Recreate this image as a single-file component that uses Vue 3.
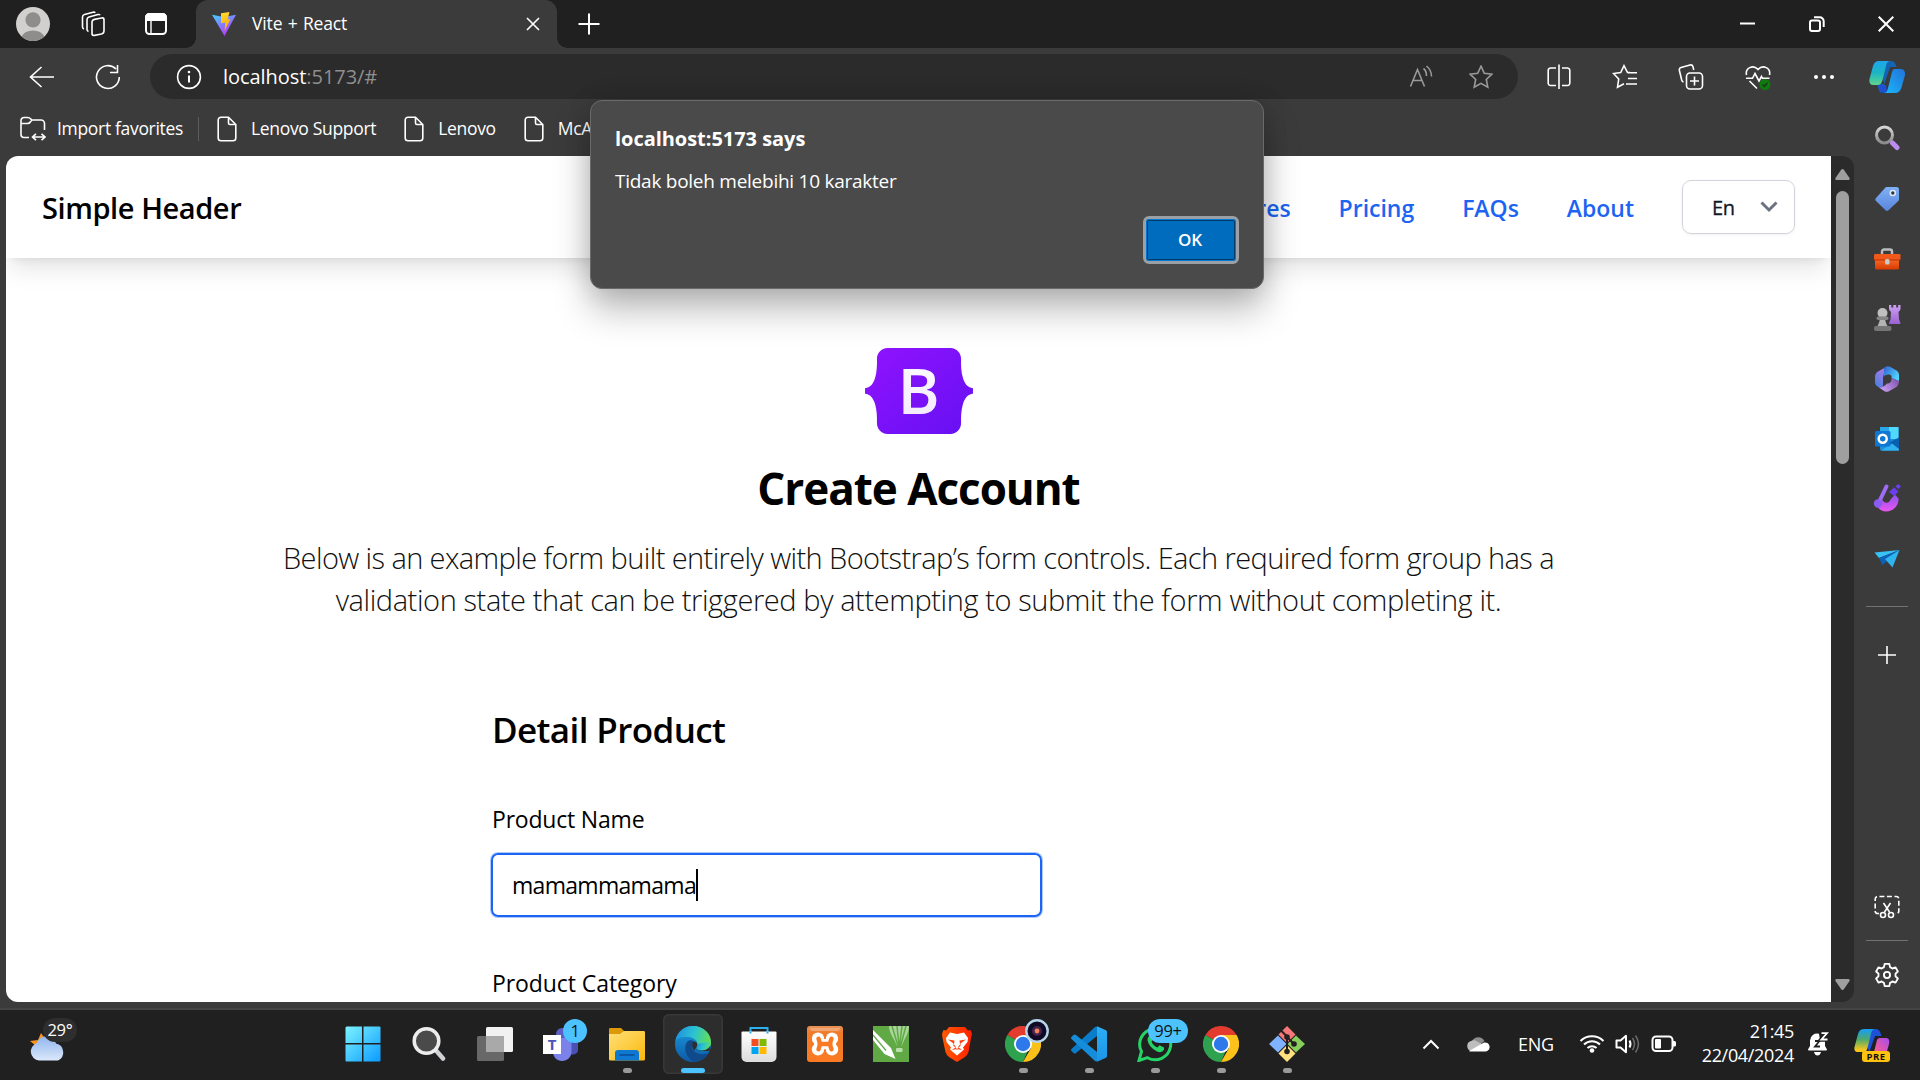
<script setup>
import { ref } from 'vue'

const bookmarks = ['Lenovo Support', 'Lenovo', 'McAfee']
const links = ['Features', 'Pricing', 'FAQs', 'About']
const productName = ref('mamammamama')
</script>

<template>
  <div class="desktop">
    <svg width="0" height="0" class="defs" aria-hidden="true">
      <defs>
        <linearGradient id="vite-a" x1="0" y1="0" x2="0.6" y2="1"><stop offset="0" stop-color="#41d1ff" /><stop offset="1" stop-color="#bd34fe" /></linearGradient>
        <linearGradient id="vite-b" x1="0" y1="0" x2="0.2" y2="1"><stop offset="0" stop-color="#ffdd35" /><stop offset="1" stop-color="#ffa800" /></linearGradient>
        <linearGradient id="cp-a" x1="0" y1="0" x2="0" y2="1"><stop offset="0" stop-color="#1fa5ee" /><stop offset="0.5" stop-color="#1cb5c4" /><stop offset="1" stop-color="#5fd68a" /></linearGradient>
        <linearGradient id="cp-b" x1="1" y1="0" x2="0" y2="1"><stop offset="0" stop-color="#2272d8" /><stop offset="1" stop-color="#19b8fb" /></linearGradient>
        <linearGradient id="cp-c" x1="0" y1="0" x2="0" y2="1"><stop offset="0" stop-color="#159dfa" /><stop offset="0.45" stop-color="#4ca96e" /><stop offset="0.9" stop-color="#f5c51c" /></linearGradient>
        <linearGradient id="cp-d" x1="1" y1="0" x2="0" y2="1"><stop offset="0" stop-color="#a44df0" /><stop offset="0.55" stop-color="#ee5aa0" /><stop offset="1" stop-color="#ff9a55" /></linearGradient>
        <linearGradient id="win" x1="0" y1="0" x2="1" y2="1"><stop offset="0" stop-color="#7df3ff" /><stop offset="1" stop-color="#0a9bff" /></linearGradient>
        <linearGradient id="bs" x1="0" y1="0" x2="1" y2="1"><stop offset="0" stop-color="#9013fe" /><stop offset="1" stop-color="#6610f2" /></linearGradient>
        <linearGradient id="bs-b" x1="0" y1="0" x2="0" y2="1"><stop offset="0" stop-color="#fff" /><stop offset="1" stop-color="#f1e5fc" /></linearGradient>
        <linearGradient id="folder" x1="0" y1="0" x2="1" y2="1"><stop offset="0" stop-color="#ffe07a" /><stop offset="1" stop-color="#fbb90c" /></linearGradient>
        <linearGradient id="edge-a" x1="0" y1="0.3" x2="1" y2="0.5"><stop offset="0" stop-color="#1f8fe0" /><stop offset="0.5" stop-color="#2bc3d2" /><stop offset="1" stop-color="#63e04f" /></linearGradient>
        <linearGradient id="edge-b" x1="0" y1="0" x2="0" y2="1"><stop offset="0" stop-color="#1b9de2" /><stop offset="1" stop-color="#0c59a4" /></linearGradient>
        <linearGradient id="cloud" x1="0" y1="0" x2="0" y2="1"><stop offset="0" stop-color="#8fb5ee" /><stop offset="1" stop-color="#dce8fb" /></linearGradient>
        <linearGradient id="tag" x1="0" y1="0" x2="0" y2="1"><stop offset="0" stop-color="#7fb0f5" /><stop offset="1" stop-color="#5a86dc" /></linearGradient>
        <linearGradient id="box" x1="0" y1="0" x2="0" y2="1"><stop offset="0" stop-color="#ff7a35" /><stop offset="1" stop-color="#d83b01" /></linearGradient>
        <linearGradient id="silver" x1="0" y1="0" x2="0" y2="1"><stop offset="0" stop-color="#d6d6d6" /><stop offset="1" stop-color="#8a8a8a" /></linearGradient>
        <linearGradient id="rook" x1="0" y1="0" x2="0" y2="1"><stop offset="0" stop-color="#cfa0f5" /><stop offset="1" stop-color="#9a62cf" /></linearGradient>
        <linearGradient id="m-a" x1="0" y1="1" x2="0.6" y2="0"><stop offset="0" stop-color="#3f7fe0" /><stop offset="1" stop-color="#b07be8" /></linearGradient>
        <linearGradient id="m-b" x1="0" y1="0" x2="1" y2="0.6"><stop offset="0" stop-color="#2f5fd0" /><stop offset="1" stop-color="#4fd3ff" /></linearGradient>
        <linearGradient id="m-c" x1="0" y1="0.5" x2="1" y2="0"><stop offset="0" stop-color="#c79af0" /><stop offset="1" stop-color="#7a4fa8" /></linearGradient>
        <linearGradient id="pink" x1="0" y1="0" x2="0" y2="1"><stop offset="0" stop-color="#8b52f0" /><stop offset="1" stop-color="#ec56f0" /></linearGradient>
        <linearGradient id="brave" x1="0" y1="0" x2="1" y2="0"><stop offset="0" stop-color="#ff5a00" /><stop offset="1" stop-color="#ff2000" /></linearGradient>
        <linearGradient id="vs" x1="0" y1="0" x2="0" y2="1"><stop offset="0" stop-color="#2bb0f5" /><stop offset="1" stop-color="#1c94e6" /></linearGradient>
        <linearGradient id="store" x1="0" y1="0" x2="0" y2="1"><stop offset="0" stop-color="#fff" /><stop offset="1" stop-color="#dcdcdc" /></linearGradient>
        <linearGradient id="xampp" x1="0" y1="0" x2="0" y2="1"><stop offset="0" stop-color="#e8935a" /><stop offset="0.2" stop-color="#f27a26" /><stop offset="1" stop-color="#fb7a24" /></linearGradient>
      </defs>
    </svg>

    <div class="browser">
      <header class="tabstrip">
        <div class="slot s66">
          <svg width="34" height="34" viewBox="0 0 34 34"><circle cx="17" cy="17" r="17" fill="#d2d0ce" /><circle cx="17" cy="12.800" r="7.600" fill="#8f8d8b" /><path d="M5.500 29.500A12.500 10 0 0 1 28.500 29.500A17 17 0 0 1 5.500 29.500Z" fill="#8f8d8b" /></svg>
        </div>
        <div class="slot s54">
          <svg width="26" height="26" viewBox="0 0 26 26" class="ln"><rect x="12" y="7.500" width="12" height="16" rx="2.500" transform="skewY(-12) translate(0 4)" /><path d="M8.500 20.500C7.500 20 7 19.500 7 18.500V8.500C7 7 7.600 6.300 9 5.900L18 3.500C19 3.300 19.700 3.600 20 4.300M4 18C3 17.500 2.500 17 2.500 16V6C2.500 4.700 3 3.900 4.500 3.500L13 1.200C14 1 14.800 1.300 15 2" /></svg>
        </div>
        <div class="slot s72">
          <svg width="24" height="24" viewBox="0 0 24 24" class="ln w2"><rect x="2" y="2" width="20" height="20" rx="3.500" /><path d="M2 5.500A3.500 3.500 0 0 1 5.500 2h13A3.500 3.500 0 0 1 22 5.500V8H2Z" fill="#fff" /><path d="M7 8v14" stroke-width="1.400" /></svg>
        </div>
        <div class="tab">
          <svg width="24" height="24" viewBox="0 0 24 24"><path d="M0 2.800L12.500 24 24 2.800 12 5Z" fill="url(#vite-a)" /><path d="M9 1.200L17.500 0l-1.800 7.500 2.800-.5L12.500 19l.8-8.500-4.300.8Z" fill="url(#vite-b)" /></svg>
          <span class="tab-title">Vite + React</span>
          <svg class="tab-close" width="14" height="14" viewBox="0 0 14 14"><path d="M1 1L13 13M13 1L1 13" class="ln" /></svg>
        </div>
        <div class="slot s64">
          <svg width="22" height="22" viewBox="0 0 22 22" class="ln w2"><path d="M11 .500V21.500M.500 11H21.500" /></svg>
        </div>
        <div class="window-buttons">
          <span><svg width="16" height="16" viewBox="0 0 16 16"><path d="M0 7.500H15" stroke="#fff" stroke-width="2" /></svg></span>
          <span><svg width="16" height="16" viewBox="0 0 16 16" class="ln w2"><rect x="1" y="4.500" width="10" height="10.500" rx="2" /><path d="M5 1.300H10.500A4 4 0 0 1 14.700 5.500V11" /></svg></span>
          <span><svg width="16" height="16" viewBox="0 0 16 16" class="ln w2"><path d="M.700.700L15.300 15.300M15.300.700L.700 15.300" /></svg></span>
        </div>
      </header>

      <div class="toolbar">
        <div class="slot s84">
          <svg width="26" height="22" viewBox="0 0 26 22" class="ln"><path d="M12.500 1L1.500 11 12.500 21M1.500 11H25" /></svg>
        </div>
        <div class="slot s48">
          <svg width="26" height="26" viewBox="0 0 26 26" class="ln"><path d="M24.300 13A11.400 11.400 0 1 1 21 5M22.500 1V8.500H15" /></svg>
        </div>
        <div class="address">
          <svg width="26" height="26" viewBox="0 0 26 26" class="ln"><circle cx="13" cy="13" r="11.400" /><path d="M13 11.500V18.500" stroke-width="2" /><circle cx="13" cy="8" r="1.300" fill="#fff" stroke="none" /></svg>
          <p class="url"><span>localhost</span>:5173/#</p>
          <div class="address-actions">
            <svg width="24" height="24" viewBox="0 0 24 24" class="ln dim"><path d="M1.500 21.500L8.500 4.500 15.500 21.500M4 15.500H13M14.500 3.500C16.500 5 17.500 7.500 17.500 11M17.500 1C20.500 3.500 22.500 7 22.500 11.500" /></svg>
            <svg width="24" height="24" viewBox="0 0 24 24" class="ln dim"><path d="M12 1.200L15.300 8.300 23 9.200 17.300 14.500 18.800 22.200 12 18.400 5.200 22.200 6.700 14.500 1 9.200 8.700 8.300Z" /></svg>
          </div>
        </div>
        <div class="tools">
          <span><svg width="24" height="26" viewBox="0 0 24 26" class="ln"><path d="M9 4H4A2.500 2.500 0 0 0 1.200 6.500V18.500A2.500 2.500 0 0 0 4 21.500H9M15 4H20A2.500 2.500 0 0 1 22.800 6.500V18.500A2.500 2.500 0 0 1 20 21.500H15M12 .500V25" /></svg></span>
          <span><svg width="26" height="26" viewBox="0 0 26 26" class="ln"><path d="M18 8.500L15.500 8.500 12 1.700 8.700 8.500 1.500 9.500 6.700 15 5.500 23.300 12 19.700M16 8.700H25M16 14.500H25M14 20H25" /></svg></span>
          <span><svg width="26" height="26" viewBox="0 0 26 26" class="ln"><rect x="8.500" y="9" width="16" height="16" rx="3.500" /><path d="M16.500 12.500V21.500M12 17H21M5.500 18C4.500 17.800 4 17 3.700 16L1.400 6.500C1.100 5 1.700 4 3 3.600L12 1C13.500.700 14.600 1.300 15 2.700L15.700 6" /></svg></span>
          <span><svg width="26" height="26" viewBox="0 0 26 26" class="ln"><path d="M1.500 11C0 4 8 .200 13 5.500 18 .200 26 4 24.500 11M1 14.300H7.500L10 9.500 14 17 16.500 12.500 17.500 14.300H24.500M4.500 17L12 24.500" /><circle cx="20" cy="20.500" r="5.500" fill="#0f7b0f" stroke="none" /><path d="M17.500 20.500L19.300 22.300 22.500 19" stroke="#1b3a1b" /></svg></span>
          <span><svg width="22" height="6" viewBox="0 0 22 6" fill="#fff"><circle cx="3" cy="3" r="2" /><circle cx="11" cy="3" r="2" /><circle cx="19" cy="3" r="2" /></svg></span>
        </div>
        <div class="slot copilot-slot">
          <svg width="36" height="34" viewBox="0 0 36 34"><path d="M10 1H22C25 1 26.500 3 27.500 7H21L15 25 12 33C9 31 9.500 26 8 24H15Z" fill="#1464b4" /><path d="M9 25H17L18 33H15C11 33 10.500 28 9 25Z" fill="#1d4fd8" /><path d="M10 1H21C18 1 17.500 4 16.500 8L13.500 20C12.500 24 11 25 8 25H4C1 25 0 22 .500 19L4 6C5 2.500 7 1 10 1Z" fill="url(#cp-a)" /><path d="M26 9H32C35 9 36.500 12 36 15L32.500 27.500C31.500 31 29.500 33 26 33H15C18 33 18.500 30 19.500 26L22.500 14C23.500 10 24 9 26 9Z" fill="url(#cp-b)" /></svg>
        </div>
      </div>

      <div class="body">
        <div class="main-col">
          <nav class="bookmarks">
            <svg width="26" height="26" viewBox="0 0 26 26" class="ln"><path d="M9 21.500H4A3 3 0 0 1 1 18.500V4.500A3 3 0 0 1 4 1.500H7.500C9 1.500 10 2 11 3.200L12 4H21A3.500 3.500 0 0 1 24.500 7.500V14M1 7.500H7.500C9 7.500 9.800 6.800 10.500 5.700L12 4M13 21H24.500M16 17.800L12.500 21 16 24.200M21.500 17.800L25 21 21.500 24.200" /></svg>
            <span class="bm import">Import favorites</span>
            <i class="divider"></i>
            <template v-for="b in bookmarks" :key="b">
              <svg class="doc" width="20" height="26" viewBox="0 0 20 26"><path d="M4 1.200H11.500L18.800 8.500V22A2.800 2.800 0 0 1 16 24.800H4A2.800 2.800 0 0 1 1.200 22V4A2.800 2.800 0 0 1 4 1.200ZM11.500 1.500V7A1.500 1.500 0 0 0 13 8.500H18.500" class="ln" /></svg>
              <span class="bm">{{ b }}</span>
            </template>
          </nav>

          <div class="viewport">
            <main class="page">
              <div class="page-header">
                <h1>Simple Header</h1>
                <nav class="links">
                  <a v-for="l in links" :key="l">{{ l }}</a>
                  <div class="lang">
                    <span>En</span>
                    <svg width="18" height="12" viewBox="0 0 18 12"><path d="M1.500 1.500L9 9 16.500 1.500" fill="none" stroke="#6b7280" stroke-width="3" /></svg>
                  </div>
                </nav>
              </div>
              <section class="intro">
                <svg class="logo" width="108" height="86" viewBox="0 0 512 408">
                  <path fill="url(#bs)" d="M106.342 0c-29.214 0-50.827 25.580-49.860 53.320.927 26.647-.278 61.165-8.966 89.310C38.802 170.862 24.070 188.707 0 191v26c24.069 2.293 38.802 20.138 47.516 48.370 8.688 28.145 9.893 62.663 8.965 89.311C55.515 382.420 77.128 408 106.342 408h299.353c29.214 0 50.827-25.580 49.861-53.319-.928-26.648.277-61.166 8.964-89.311 8.715-28.232 23.411-46.077 47.480-48.370v-26c-24.069-2.293-38.765-20.138-47.480-48.370-8.687-28.145-9.892-62.663-8.964-89.310C456.522 25.580 434.909 0 405.695 0H106.342z" />
                  <text x="254" y="313" text-anchor="middle" class="bs-letter" fill="url(#bs-b)">B</text>
                </svg>
                <h2>Create Account</h2>
                <p class="lead"><span class="l1">Below is an example form built entirely with Bootstrap’s form controls. Each required form group has a</span><br><span class="l2">validation state that can be triggered by attempting to submit the form without completing it.</span></p>
              </section>
              <form class="form">
                <h3>Detail Product</h3>
                <label class="name">Product Name</label>
                <div class="field"><span>{{ productName }}</span><i class="caret"></i></div>
                <label class="category">Product Category</label>
              </form>
            </main>
            <div class="scrollbar">
              <svg width="15" height="11" viewBox="0 0 15 11"><path d="M7.500 0C8.200 0 8.600.400 9 1L14.500 9C15 10 14.600 11 13.500 11H1.500C.400 11 0 10 .500 9L6 1C6.400.400 6.800 0 7.500 0Z" fill="#9f9f9f" /></svg>
              <i class="thumb"></i>
              <svg class="down" width="15" height="11" viewBox="0 0 15 11"><path d="M7.500 11C8.200 11 8.600 10.600 9 10L14.500 2C15 1 14.600 0 13.500 0H1.500C.400 0 0 1 .500 2L6 10C6.400 10.600 6.800 11 7.500 11Z" fill="#9f9f9f" /></svg>
            </div>
          </div>
        </div>

        <aside class="sidebar">
          <span><svg class="lift" width="26" height="26" viewBox="0 0 26 26"><circle cx="10.500" cy="10" r="8" fill="none" stroke="url(#silver)" stroke-width="3" /><path d="M18.500 18L23 22.500" stroke="#bd8cf0" stroke-width="5" stroke-linecap="round" /></svg></span>
          <span><svg width="26" height="26" viewBox="0 0 26 26"><path d="M13 1H22.500A2.500 2.500 0 0 1 25 3.500V13C25 14 24.700 14.500 24 15.200L14.500 24.200C13.500 25.200 12.500 25.200 11.500 24.200L2 15C1 14 1 13 2 12L11 2C11.600 1.300 12 1 13 1Z" fill="url(#tag)" /><circle cx="18.800" cy="7" r="2.500" fill="#2d3440" stroke="#dfe8f5" stroke-width="1.600" /></svg></span>
          <span><svg width="28" height="22" viewBox="0 0 28 22"><path d="M9 6V3.500A2 2 0 0 1 11 1.500H17A2 2 0 0 1 19 3.500V6" fill="none" stroke="#bdbdbd" stroke-width="2.400" /><rect x="2" y="8" width="24" height="13.500" rx="1.500" fill="url(#box)" /><rect x="1" y="6" width="26.500" height="6" rx="1.200" fill="#f0591a" /><path d="M1 12H27.500" stroke="#b93200" /><rect x="12" y="11" width="4.500" height="5.500" rx="1.500" fill="#c9c9c9" /></svg></span>
          <span><svg class="lift" width="28" height="28" viewBox="0 0 28 28"><path d="M16 1H18.300V3.500H20.300V1H23.200V3.500H25.200V1H27.500V5C27.500 6.500 26 7 25.500 8L26 15C26.300 17 27.500 18 27.500 20H16C16 18 17.200 17 17.500 15L18 8C17.500 7 16 6.500 16 5Z" fill="url(#rook)" /><circle cx="9.500" cy="9" r="5" fill="#bfbfbf" /><path d="M7 12H12C12 17 13 19 14.500 22H4.500C6 19 7 17 7 12Z" fill="#b3b3b3" /><rect x="3.500" y="12.500" width="12" height="3.500" rx="1.700" fill="#858585" /><rect x="1" y="22" width="17.500" height="5" rx="2" fill="#757575" /></svg></span>
          <span><svg width="26" height="26" viewBox="0 0 26 26"><path d="M13 .500L4 5.500C2 6.800 1 8.500 1 10.500V16C1 18 2 19.500 3.500 20.500L6 22 9 20.500V11C9 9.500 9.500 8.500 11 7.500Z" fill="url(#m-a)" /><path d="M10 2L13 .300C14 0 15 .200 16 .700L22.500 4.500C24 5.500 25 7 25 9V15L17.500 12C18 10 17 8.500 15 8.500 12.500 8.500 9.500 9.500 9.500 12Z" fill="url(#m-b)" /><path d="M5 21.500C8 22 11 19.500 13 17.500 16 17.500 18 15.500 17.500 12L25 15C25 18 24 20 22 21.300L15 25.200C13.500 26 12 26 10.500 25.200Z" fill="url(#m-c)" /></svg></span>
          <span><svg width="26" height="26" viewBox="0 0 26 26"><rect x="6" y="1" width="18.500" height="23.500" rx="1.500" fill="#1b8fdc" /><rect x="6" y="1" width="9" height="12" fill="#28a8ea" /><rect x="15" y="1" width="9.500" height="12" fill="#50d9ff" /><path d="M15 18L24.500 12.500V24.500H8Z" fill="#1490df" /><path d="M14 17L25 11.500V23Z" fill="#0a5fae" /><path d="M7 24.500L18 17.500 25 23V24.500Z" fill="#32b2ee" /><rect x="1" y="5" width="15.500" height="15.500" rx="1.500" fill="#0f78d4" /><circle cx="8.700" cy="12.700" r="4" fill="none" stroke="#fff" stroke-width="2.500" /></svg></span>
          <span><svg class="lift" width="28" height="30" viewBox="0 0 28 30"><path d="M3 17C3 24 7 28.500 13 28.500 20 28.500 26 23 25.500 15.500L22 11.500 17.500 16.500C16 21 11 20.500 9.500 17Z" fill="url(#pink)" /><path d="M13.500 3.500L6.500 18" stroke="#a06cf5" stroke-width="4" stroke-linecap="round" /><circle cx="5" cy="20.500" r="4.200" fill="#8a5cf0" /><path d="M21 4.500L25.500 8.500 21 13 16 9Z" fill="#6b3ff0" /><path d="M25 1L28 3.500 25.500 6 22.500 3.500Z" fill="#6b3ff0" /></svg></span>
          <span><svg width="26" height="20" viewBox="0 0 26 20"><path d="M.500 3.500L25.500 1 5 9Z" fill="#38c1f5" /><path d="M5 9L25.500 1 8.500 16Z" fill="#0b62b8" /><path d="M11 10L25.500 1 18.500 18.500Z" fill="#2fb4f0" /></svg></span>
          <i class="rule"></i>
          <span class="add"><svg width="20" height="20" viewBox="0 0 20 20" class="ln"><path d="M10 1V19M1 10H19" /></svg></span>
          <div class="sidebar-bottom">
            <span><svg width="26" height="24" viewBox="0 0 26 24" class="ln"><path d="M5 18.500H3.500A2.300 2.300 0 0 1 1.200 16.200V4A2.500 2.500 0 0 1 3.700 1.500H22.300A2.500 2.500 0 0 1 24.800 4V16.200A2.300 2.300 0 0 1 22.500 18.500H21" stroke-dasharray="5 2.500" /><path d="M9.500 8L15.500 17M16.500 8L10.500 17" /><circle cx="9" cy="20" r="2.500" /><circle cx="17" cy="20" r="2.500" /></svg></span>
            <i class="rule"></i>
            <span><svg width="26" height="28" viewBox="0 0 28 28" class="ln w2"><path d="M11.500 2H16.500L17.300 5.500 19.800 7 23.200 5.800 25.700 10.200 23.200 12.600V15.400L25.700 17.800 23.200 22.200 19.800 21 17.300 22.500 16.500 26H11.500L10.700 22.500 8.200 21 4.800 22.200 2.300 17.800 4.800 15.400V12.600L2.300 10.200 4.800 5.800 8.200 7 10.700 5.500Z" stroke-linejoin="round" /><circle cx="14" cy="14" r="3.300" /></svg></span>
          </div>
        </aside>
      </div>

      <div class="dialog" role="alertdialog">
        <h4>localhost:5173 says</h4>
        <p>Tidak boleh melebihi 10 karakter</p>
        <button>OK</button>
      </div>
    </div>

    <footer class="taskbar">
      <div class="weather">
        <svg width="38" height="36" viewBox="0 0 38 36"><path d="M1 15L9 14 12 7 17 14 12 24Z" fill="#f7941d" /><path d="M10 34.500A9 9 0 0 1 8 17 10 10 0 0 1 27 17.500 9 9 0 0 1 29 34.500Z" fill="url(#cloud)" /></svg>
        <span class="temp">29°</span>
      </div>
      <div class="apps">
        <span><svg width="36" height="36" viewBox="0 0 36 36"><path d="M1.500.500H17V17H.500V1.500ZM18.500.500H34.500Q35.500.500 35.500 1.500V17H18.500ZM.500 18.500H17V35.500H1.500Q.500 35.500.500 34.500ZM18.500 18.500H35.500V34.500Q35.500 35.500 34.500 35.500H18.500Z" fill="url(#win)" /></svg></span>
        <span><svg width="34" height="36" viewBox="0 0 34 36"><path d="M24.500 25L31 32.500" stroke="#cfd2d5" stroke-width="4.500" stroke-linecap="round" /><circle cx="14.500" cy="15" r="12.300" fill="#4a4a4a" stroke="#ededed" stroke-width="3.500" /></svg></span>
        <span><svg width="36" height="36" viewBox="0 0 36 36"><rect x="9" y="1" width="27" height="25" rx="1.500" fill="#f2f2f2" /><rect x="0" y="10" width="27" height="25" rx="1.500" fill="#686868" /><path d="M9 10H27V26H9Z" fill="#a9a9a9" /></svg></span>
        <span class="badged"><svg width="36" height="36" viewBox="0 0 36 36"><circle cx="19" cy="8" r="6" fill="#5b5fc7" /><path d="M26 12H35V24C35 27 32 29 28 28.500Z" fill="#4b50b5" /><path d="M10 12H28.500V26C28.500 31 24 35 19 35S10 31 10 26Z" fill="#7b83eb" /><rect x="0" y="9" width="18" height="19" fill="#fff" /></svg><b class="teams-t">T</b><em class="badge one">1</em></span>
        <span class="run"><svg width="36" height="36" viewBox="0 0 36 36"><path d="M0 3Q0 2 1.500 2H12L15 5V10H0Z" fill="#dc9a08" /><path d="M0 8H11L15 5H35Q36 5 36 6.500V33Q36 34.500 34.500 34.500H1.500Q0 34.500 0 33Z" fill="url(#folder)" /><path d="M6 34.500V27A3 3 0 0 1 9 24H27A3 3 0 0 1 30 27V34.500Z" fill="#0f78d0" /><path d="M10.500 29H25.500" stroke="#0a4f96" stroke-width="1.600" /></svg></span>
        <span class="run active"><svg width="36" height="36" viewBox="0 0 36 36"><circle cx="18" cy="18" r="18" fill="url(#edge-b)" /><path d="M.500 15C2 6 9 0 18 0 28 0 36 7 36 16 36 22 31 24.500 27 24.500 23 24.500 20.500 23 22 20.500 24 16.500 20 11.500 14 11 7 10.500 2 12 .500 15Z" fill="url(#edge-a)" /><path d="M12 16C8.500 21 10 30 18 35.500 25 36 31 32 34 26.500 30 29 22 29 18.500 24.500 16 21 17.500 17 19 15.500 16.500 13.500 13.500 14 12 16Z" fill="#114a8b" /><path d="M22 20.500C20.500 23.500 23.500 25 27.500 25 31 25 34 24.500 34.500 25.500L35 20 22.300 19Z" fill="#2e2e2e" /><path d="M21.500 20.500C23 16 27 18 36 15C36.500 21 32 24.500 27 24.500 23 24.500 20.700 23 21.500 20.500Z" fill="url(#edge-a)" /><path d="M18.500 15.500C21 15.500 23 17 22 20 21.500 22 20 22.500 19.500 24.500 16 21 17 17 18.500 15.500Z" fill="#2e2e2e" /></svg></span>
        <span><svg width="36" height="36" viewBox="0 0 36 36"><path d="M9.500 8V2H26.500V8" fill="none" stroke="#2ab0ee" stroke-width="2" /><path d="M.500 6.500Q.500 5.500 1.500 5.500H34.500Q35.500 5.500 35.500 6.500V31A5 5 0 0 1 30.500 36H5.500A5 5 0 0 1 .500 31Z" fill="url(#store)" /><path d="M9.500 5.500V7.500M26.500 5.500V7.500" stroke="#2ab0ee" stroke-width="2" /><path d="M10.500 13H17.500V20H10.500Z" fill="#f25022" /><path d="M18.500 13H25.500V20H18.500Z" fill="#7fba00" /><path d="M10.500 21H17.500V28H10.500Z" fill="#00a4ef" /><path d="M18.500 21H25.500V28H18.500Z" fill="#ffb900" /></svg></span>
        <span><svg width="36" height="36" viewBox="0 0 36 36"><rect width="36" height="36" rx="3" fill="url(#xampp)" /><path d="M3 2H33V3Q32 5 30 5H6Q4 5 3 3Z" fill="#f5c7a5" opacity="0.500" /><g fill="#fff"><circle cx="11" cy="12.700" r="6.200" /><circle cx="25" cy="12.700" r="6.200" /><circle cx="11" cy="23.300" r="6.200" /><circle cx="25" cy="23.300" r="6.200" /><rect x="7" y="13" width="22" height="10" /></g><g fill="none" stroke="#f97a24" stroke-linecap="round" stroke-width="4.400"><path d="M11.500 12.800Q14 18 11.500 23.200M24.500 12.800Q22 18 24.500 23.200M13 18H23" /></g></svg></span>
        <span><svg width="36" height="36" viewBox="0 0 36 36"><path d="M0 0H36V36H0Z" fill="#60a945" /><path d="M16 0H36C36 7 32 12 28.500 20H24C21 12 16 7 16 0Z" fill="#a9d59a" /><path d="M19 0L25 20M33 0L27.500 20M24 0L26 20M29 0L26.500 20" stroke="#60a945" stroke-width="1.500" /><rect x="23" y="22" width="6.500" height="4" rx="1" fill="#b9dfac" /><path d="M0 4L18 22 22.500 33 11.500 28 0 14Z" fill="#fff" /><path d="M0 9L13 24.500" stroke="#60a945" stroke-width="1.200" /></svg></span>
        <span><svg width="36" height="36" viewBox="0 0 36 36"><path d="M10 1H26L29 4.500 31.500 4 33 8 32 12 29.500 26Q28.500 29 26 31L18 36 10 31Q7.500 29 6.500 26L3.500 12 3 8 4.500 4 7 4.500Z" fill="url(#brave)" /><path d="M11 6.500L18 8 25 6.500 29 12 28.500 16 24 21.500 25 23.500 18 29.500 11 23.500 12 21.500 7.500 16 7 12Z" fill="#fff" /><path d="M9 13.500L15.500 14.500 15 18.500 17 21 13 24 18 22.500 23 24 19 21 21 18.500 20.500 14.500 27 13.500 21.500 17.500 21.500 20 18 22.500 14.500 20V17.500ZM12 24L18 23.500 24 24" fill="#fb4314" /></svg></span>
        <span class="run badged"><svg width="36" height="36" viewBox="0 0 36 36"><path d="M18 18L2.400 9A18 18 0 0 1 33.600 9Z" fill="#e33b2e" /><path d="M18 18H25.800L18 36A18 18 0 0 1 2.400 9Z" fill="#2fa24f" /><path d="M18 9H33.600A18 18 0 0 1 18 36L25.800 22.500Z" fill="#fdc21a" /><circle cx="18" cy="18" r="9" fill="#fff" /><circle cx="18" cy="18" r="7.200" fill="#2d78ea" /></svg><svg class="ava" width="24" height="24" viewBox="0 0 24 24"><circle cx="12" cy="12" r="10.700" fill="#100a24" stroke="#b4d4ec" stroke-width="2.400" /><circle cx="12" cy="12" r="5" fill="#43234c" /><circle cx="12" cy="12" r="2.400" fill="#f4805c" /></svg></span>
        <span class="run"><svg width="36" height="36" viewBox="0 0 36 36"><path d="M26 .500V10L5 27Q3.500 28 2.500 27L.500 25Q-.500 24 .500 23L24 1Z" fill="#0a7cc9" /><path d="M26 35.500V26L5 9Q3.500 8 2.500 9L.500 11Q-.500 12 .500 13L24 35Z" fill="#168ddb" /><path d="M26 .300L35 4.200Q36 4.700 36 6V30Q36 31.300 35 31.800L26 35.700Z" fill="url(#vs)" /></svg></span>
        <span class="run badged"><svg width="36" height="36" viewBox="0 0 36 36"><path d="M2 34.500L4.500 25.500A15.500 15.500 0 1 1 10.500 31.700Z" fill="none" stroke="#25d366" stroke-width="3" /><path d="M13 9.500Q10.500 10.500 10.500 14 11.500 21 20 25.500 25 27.500 27 23.500V21.500L22.500 19.300 20.500 21.500Q16 19.500 14.500 15.500L16 13.500 14.500 9.500Z" fill="#25d366" /></svg><em class="badge many">99+</em></span>
        <span class="run"><svg width="36" height="36" viewBox="0 0 36 36"><path d="M18 18L2.400 9A18 18 0 0 1 33.600 9Z" fill="#e33b2e" /><path d="M18 18H25.800L18 36A18 18 0 0 1 2.400 9Z" fill="#2fa24f" /><path d="M18 9H33.600A18 18 0 0 1 18 36L25.800 22.500Z" fill="#fdc21a" /><circle cx="18" cy="18" r="9" fill="#fff" /><circle cx="18" cy="18" r="7.200" fill="#2d78ea" /></svg></span>
        <span class="run"><svg width="36" height="36" viewBox="0 0 36 36"><path d="M18 0L26.500 8.500 18 17 9.500 8.500Z" fill="#f87878" /><path d="M9 9.500L17.500 18 9 26.500 0 18Z" fill="#80b3ff" /><path d="M27 9.500L36 18 27 26.500 18.500 18Z" fill="#87ce5c" /><path d="M18 19L26.500 27.500 18 36 9.500 27.500Z" fill="#ffe07f" /><path d="M12 4.500L18 10.500V26M18 11L25 18" stroke="#231f20" stroke-width="2" fill="none" /><circle cx="18" cy="11" r="2.800" fill="#231f20" /><circle cx="18" cy="25.500" r="2.800" fill="#231f20" /><circle cx="25" cy="18" r="2.800" fill="#231f20" /></svg></span>
      </div>
      <div class="tray">
        <svg class="chev" width="18" height="11" viewBox="0 0 18 11"><path d="M1.500 9.500L9 2 16.500 9.500" class="ln w2" /></svg>
        <svg class="onedrive" width="24" height="18" viewBox="0 0 24 18"><path d="M6 6A7 7 0 0 1 18.500 6L12 11Z" fill="#8e8e8e" /><path d="M5 16A5.200 5.200 0 0 1 5 6Q8 4.500 11 6.500L22 12Z" fill="#bdbdbd" /><path d="M3 16L18 7.500A4.500 4.500 0 0 1 20 16.500H5Q3.700 16.500 3 16Z" fill="#fff" /></svg>
        <span class="lang-code">ENG</span>
        <svg class="wifi" width="26" height="20" viewBox="0 0 26 20"><path d="M1.500 7A16.500 16.500 0 0 1 24.500 7M5 10.500A11.500 11.500 0 0 1 21 10.500M8.500 14A6.500 6.500 0 0 1 17.500 14" class="ln w2" /><circle cx="13" cy="16.500" r="2.300" fill="#fff" /></svg>
        <svg class="vol" width="26" height="20" viewBox="0 0 26 20"><path d="M1.500 6.500H5.500L11 1.800V18.200L5.500 13.500H1.500ZM14.500 6.500Q16.500 10 14.500 13.500" class="ln w2" stroke-linejoin="round" /><path d="M17.500 4Q21.500 10 17.500 16M20.500 1.500Q26.500 10 20.500 18.500" fill="none" stroke="#6b6b6b" stroke-width="1.500" /></svg>
        <svg class="bat" width="26" height="18" viewBox="0 0 26 18"><rect x="1.500" y="1.500" width="20" height="14.500" rx="3.500" class="ln w2" /><rect x="4" y="4" width="6" height="9.500" rx="1" fill="#fff" /><path d="M22 6H23.500Q25 6 25 7.500V10Q25 11.500 23.500 11.500H22Z" fill="#fff" /></svg>
        <div class="clock"><span class="time">21:45</span><span>22/04/2024</span></div>
        <svg class="bell" width="22" height="24" viewBox="0 0 22 24"><path d="M1 17.500L3 14V8.500A7 7 0 0 1 12 1.800L13 8 18 9V14L20 17.500Q20 18.500 19 18.500H2Q1 18.500 1 17.500ZM7 20H14Q13 23.500 10.500 23.500T7 20Z" fill="#fff" /><path d="M8 9H12.500L8 14.500H13" fill="none" stroke="#202020" stroke-width="1.800" /><path d="M14.500 1.200H20L14.500 7.500H20.500" fill="none" stroke="#202020" stroke-width="4.500" /><path d="M14.500 1.200H20L14.500 7.500H20.500" fill="none" stroke="#fff" stroke-width="1.800" /></svg>
        <div class="pre">
          <svg width="36" height="34" viewBox="0 0 36 34"><path d="M10 1H22C25 1 26.500 4 27.500 8H21L15 25Z" fill="#1c51d8" /><path d="M10 1H21C18 1 17.500 4 16.500 8L13.500 20C12.500 24 11 24 8 24H4C1 24 0 22 .500 19L4 6C5 2.500 7 1 10 1Z" fill="url(#cp-c)" /><path d="M26 10H32C34.500 10 36 12 35 16L32.500 25 30 33H15C18 33 18.500 30 19.500 26L22.500 14C23 11 24 10 26 10Z" fill="url(#cp-d)" /></svg>
          <b>PRE</b>
        </div>
      </div>
    </footer>
  </div>
</template>

<style>
html,
body {
  margin: 0;
  background: #202020;
  overflow: hidden;
}
</style>

<style scoped>
* {
  box-sizing: border-box;
}
.desktop {
  width: 1920px;
  height: 1080px;
  overflow: hidden;
  display: flex;
  flex-direction: column;
  font-family: "Open Sans", "Noto Sans", sans-serif;
  letter-spacing: -0.32px;
  color: #fff;
  position: relative;
}
.defs {
  position: absolute;
}
h1, h2, h3, h4, p {
  margin: 0;
}
svg {
  display: block;
  flex: none;
}
.ln {
  fill: none;
  stroke: #fff;
  stroke-width: 1.6;
}
.w2 {
  stroke-width: 2;
}
.dim {
  stroke: #9a9a9a;
}
.slot {
  display: flex;
  align-items: center;
  justify-content: center;
  flex: none;
}
.s66 { width: 66px; }
.s54 { width: 54px; }
.s72 { width: 72px; }
.s64 { width: 64px; }
.s84 { width: 84px; }
.s48 { width: 48px; }

.browser {
  height: 1010px;
  flex: none;
  display: flex;
  flex-direction: column;
  background: #3b3b3b;
  border-bottom: 2px solid #444;
  position: relative;
}
.tabstrip {
  height: 48px;
  flex: none;
  display: flex;
  background: #202020;
}
.tab {
  width: 361px;
  margin-left: 4px;
  flex: none;
  display: flex;
  align-items: center;
  padding: 0 17px 0 16px;
  border-radius: 12px 12px 0 0;
  background: #3b3b3b;
  position: relative;
}
.tab::before,
.tab::after {
  content: "";
  position: absolute;
  bottom: 0;
  width: 10px;
  height: 10px;
}
.tab::before {
  left: -10px;
  background: radial-gradient(circle at 0 0, #202020 9.5px, #3b3b3b 10px);
}
.tab::after {
  right: -10px;
  background: radial-gradient(circle at 100% 0, #202020 9.5px, #3b3b3b 10px);
}
.tab-title {
  margin-left: 16px;
  padding-bottom: 2px;
  font-size: 17.5px;
  letter-spacing: -0.15px;
  word-spacing: 1px;
}
.tab-close {
  margin-left: auto;
}
.window-buttons {
  margin-left: auto;
  display: flex;
}
.window-buttons span {
  width: 69px;
  height: 47px;
  display: flex;
  align-items: center;
  justify-content: center;
}
.toolbar {
  height: 57px;
  flex: none;
  display: flex;
  align-items: center;
}
.address {
  width: 1368px;
  height: 45px;
  margin-left: 18px;
  padding: 0 25px 0 26px;
  border-radius: 23px;
  background: #2b2b2b;
  display: flex;
  align-items: center;
  flex: none;
}
.url {
  margin-left: 21px;
  font-size: 20px;
  letter-spacing: -0.05px;
  color: #8f8f8f;
}
.url span {
  color: #fff;
}
.address-actions {
  margin-left: auto;
  display: flex;
  gap: 36px;
}
.tools {
  display: flex;
  margin-left: 8px;
}
.tools span {
  width: 66.2px;
  display: flex;
  justify-content: center;
  align-items: center;
}
.copilot-slot {
  width: 60px;
}
.body {
  flex: 1;
  min-height: 0;
  display: flex;
}
.main-col {
  width: 1854px;
  display: flex;
  flex-direction: column;
}
.bookmarks {
  height: 51px;
  padding: 0 0 4px 20px;
  display: flex;
  align-items: center;
  overflow: hidden;
}
.bm {
  margin-left: 14px;
  margin-right: 28px;
  padding-bottom: 1px;
  font-size: 17.5px;
  white-space: nowrap;
}
.bm.import {
  margin-left: 11px;
  margin-right: 15px;
}
.divider {
  width: 1px;
  height: 24px;
  margin-right: 18px;
  background: #5c5c5c;
}
.viewport {
  width: 1848px;
  height: 846px;
  margin-left: 6px;
  display: flex;
  border-radius: 12px;
  overflow: hidden;
  background: #2b2b2b;
}
.page {
  width: 1825px;
  background: #fff;
  color: #000;
}
.page-header {
  height: 102px;
  padding: 0 36px;
  display: flex;
  align-items: center;
  justify-content: space-between;
  box-shadow: 0 15px 23px -4px rgba(0, 0, 0, 0.1), 0 6px 9px -6px rgba(0, 0, 0, 0.1);
}
h1 {
  font-size: 29px;
  font-weight: 600;
  letter-spacing: -0.42px;
}
.links {
  display: flex;
  align-items: center;
  gap: 48px;
  color: #1c64f2;
  font-size: 23px;
  font-weight: 600;
  letter-spacing: -0.02px;
}
.links a {
  padding-top: 2px;
}
.lang {
  width: 113px;
  height: 54px;
  padding: 0 16px 0 29px;
  display: flex;
  align-items: center;
  justify-content: space-between;
  border: 1.5px solid #d1d5db;
  border-radius: 9px;
  color: #111827;
  font-size: 20px;
  font-weight: 500;
  letter-spacing: -0.3px;
  -webkit-text-stroke: 0.3px #111827;
  box-shadow: 0 1px 3px rgba(0, 0, 0, 0.06);
}
.intro {
  display: flex;
  flex-direction: column;
  align-items: center;
  padding-top: 90px;
}
.logo {
  overflow: visible;
}
.bs-letter {
  font-size: 304px;
  font-weight: 600;
  letter-spacing: 0;
}
h2 {
  margin-top: 24px;
  font-size: 44px;
  line-height: 60px;
  font-weight: 700;
  letter-spacing: -1.04px;
}
.lead {
  margin-top: 19px;
  font-size: 29px;
  line-height: 42px;
  font-weight: 300;
  text-align: center;
  white-space: nowrap;
  color: #111;
}
.l1 {
  letter-spacing: -0.6px;
}
.l2 {
  letter-spacing: -0.41px;
}
.form {
  padding-left: 486px;
  display: flex;
  flex-direction: column;
}
h3 {
  margin-top: 82px;
  font-size: 35px;
  line-height: 54px;
  font-weight: 600;
  letter-spacing: -0.61px;
}
label {
  font-size: 23px;
  line-height: 36px;
}
.name {
  margin-top: 44px;
  letter-spacing: -0.2px;
}
.field {
  width: 551px;
  height: 64px;
  margin: 16px 0 0 -1px;
  padding-left: 19px;
  display: flex;
  align-items: center;
  border: 2px solid #1c64f2;
  border-radius: 7px;
  font-size: 23px;
  letter-spacing: -0.7px;
  box-shadow: 0 0 0 1px rgba(28, 100, 242, 0.35);
}
.caret {
  width: 2px;
  height: 32px;
  background: #000;
}
.category {
  margin-top: 48px;
  letter-spacing: -0.08px;
}
.scrollbar {
  width: 23px;
  display: flex;
  flex-direction: column;
  align-items: center;
  padding: 13px 0 12px;
}
.thumb {
  width: 13px;
  height: 273px;
  margin-top: 11px;
  border-radius: 7px;
  background: #9f9f9f;
}
.down {
  margin-top: auto;
}
.sidebar {
  width: 66px;
  padding-top: 4px;
  display: flex;
  flex-direction: column;
  align-items: center;
}
.sidebar span {
  height: 60px;
  display: flex;
  align-items: center;
}
.lift {
  margin-bottom: 2px;
}
.rule {
  width: 42px;
  height: 1px;
  margin-top: 17px;
  background: #727272;
}
.sidebar .add {
  height: 96px;
}
.sidebar-bottom {
  margin-top: auto;
  display: flex;
  flex-direction: column;
  align-items: center;
  padding-bottom: 3px;
}
.sidebar-bottom .rule {
  margin: 3px 0 4px;
}

.dialog {
  position: absolute;
  left: 590px;
  top: 100px;
  width: 674px;
  height: 189px;
  padding: 24px;
  display: flex;
  flex-direction: column;
  border: 1px solid #6a6a6a;
  border-radius: 12px;
  background: #4a4a4a;
  box-shadow: 0 20px 36px rgba(0, 0, 0, 0.28), 0 0 26px rgba(0, 0, 0, 0.12);
}
.dialog h4 {
  font-size: 20px;
  line-height: 28px;
  font-weight: 700;
  letter-spacing: -0.04px;
}
.dialog p {
  margin-top: 15px;
  font-size: 19px;
  line-height: 26px;
  letter-spacing: -0.26px;
}
.dialog button {
  width: 96px;
  height: 48px;
  margin: 22px 0 0 auto;
  padding: 0 2px 2px 0;
  border: 3px solid #9aa0a6;
  border-radius: 6px;
  background: #006cbe;
  box-shadow: inset 0 0 0 1px #0078d4, inset 0 0 0 2px #003a66;
  color: #fff;
  font: 600 17px "Open Sans", "Noto Sans", sans-serif;
}

.taskbar {
  height: 70px;
  display: flex;
  background: #202020;
  font-size: 18px;
}
.weather {
  width: 90px;
  padding: 16px 0 0 29px;
  position: relative;
}
.temp {
  position: absolute;
  left: 43px;
  top: 8px;
  width: 34px;
  height: 24px;
  border-radius: 12px;
  background: #2e2e2e;
  font-size: 16.5px;
  line-height: 23px;
  text-align: center;
}
.apps {
  display: flex;
  margin-left: 243px;
}
.apps > span {
  width: 60px;
  height: 60px;
  margin: 4px 6px 0 0;
  display: flex;
  align-items: center;
  justify-content: center;
  position: relative;
  border-radius: 6px;
}
.run::after {
  content: "";
  position: absolute;
  left: 25.5px;
  bottom: 1px;
  width: 9px;
  height: 5px;
  border-radius: 3px;
  background: #9a9a9a;
}
.active {
  background: #2d2d2d;
  box-shadow: inset 0 0 0 1.5px #383838;
}
.active::after {
  left: 18px;
  width: 24px;
  background: #4cc2ff;
}
.badge {
  position: absolute;
  top: 5px;
  height: 24px;
  border-radius: 12px;
  background: #4cc2ff;
  color: #111;
  font-size: 16.5px;
  font-style: normal;
  line-height: 24px;
  text-align: center;
}
.one {
  left: 32px;
  width: 24px;
}
.many {
  left: 23px;
  width: 40px;
}
.teams-t {
  position: absolute;
  left: 12px;
  top: 21px;
  width: 18px;
  color: #4b53bc;
  font-size: 15px;
  line-height: 19px;
  text-align: center;
}
.ava {
  position: absolute;
  left: 32px;
  top: 5px;
}
.tray {
  margin-left: auto;
  display: flex;
  align-items: center;
}
.chev {
  margin: 0 26px 2px 0;
}
.onedrive {
  margin: 0 28px 2px 0;
}
.lang-code {
  width: 36px;
  padding-bottom: 2px;
}
.wifi {
  margin: 0 0 2px 25px;
}
.vol {
  margin: 0 0 2px 10px;
}
.bat {
  margin: 0 0 2px 10px;
}
.clock {
  width: 117px;
  display: flex;
  flex-direction: column;
  align-items: flex-end;
  padding-bottom: 4px;
  line-height: 24px;
}
.bell {
  margin: 0 0 2px 13px;
}
.pre {
  width: 36px;
  margin: 0 30px 0 25px;
  position: relative;
}
.pre b {
  position: absolute;
  left: 8px;
  top: 23px;
  width: 28px;
  border-radius: 3px;
  background: #ffc20e;
  color: #111;
  font-size: 9.5px;
  line-height: 11px;
  letter-spacing: 0.05em;
  text-align: center;
}
</style>
